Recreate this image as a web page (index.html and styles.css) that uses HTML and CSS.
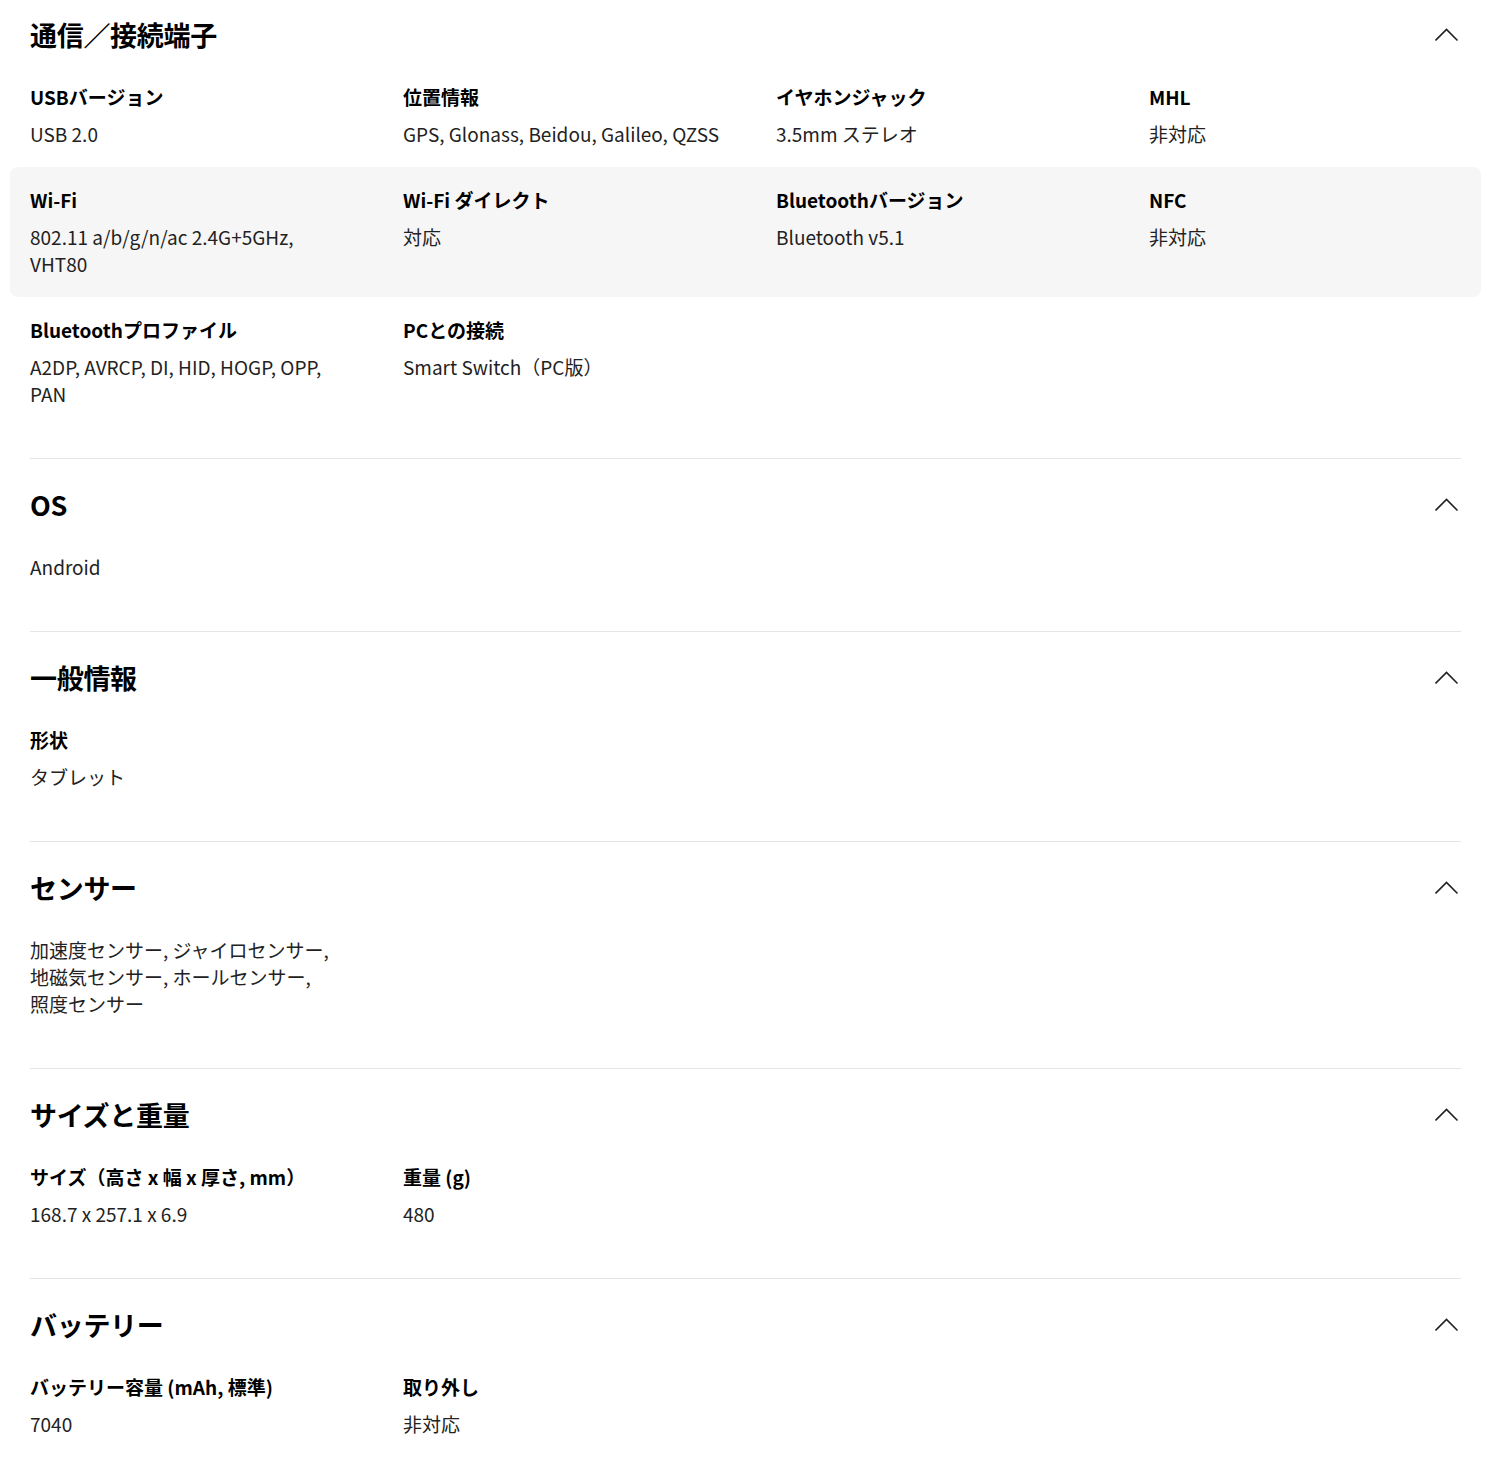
FILE: index.html
```html
<!DOCTYPE html>
<html lang="ja">
<head>
  <meta charset="UTF-8">
  <meta name="viewport" content="width=device-width, initial-scale=1.0">
  <title>スペック</title>
  <link rel="stylesheet" href="styles.css">
</head>
<body>
  <main class="specs">

    <!-- 通信／接続端子 -->
    <section class="spec-section">
      <div class="spec-head">
        <h2>通信／接続端子</h2>
        <svg class="chevron" width="24" height="24" viewBox="0 0 24 24"><polyline points="0.5,17.5 11.5,6.5 22.5,17.5"/></svg>
      </div>
      <div class="spec-row">
        <div class="spec-item"><h3>USBバージョン</h3><p>USB 2.0</p></div>
        <div class="spec-item"><h3>位置情報</h3><p>GPS, Glonass, Beidou, Galileo, QZSS</p></div>
        <div class="spec-item"><h3>イヤホンジャック</h3><p>3.5mm ステレオ</p></div>
        <div class="spec-item"><h3>MHL</h3><p>非対応</p></div>
      </div>
      <div class="spec-row">
        <div class="spec-item"><h3>Wi-Fi</h3><p>802.11 a/b/g/n/ac 2.4G+5GHz, VHT80</p></div>
        <div class="spec-item"><h3>Wi-Fi ダイレクト</h3><p>対応</p></div>
        <div class="spec-item"><h3>Bluetoothバージョン</h3><p>Bluetooth v5.1</p></div>
        <div class="spec-item"><h3>NFC</h3><p>非対応</p></div>
      </div>
      <div class="spec-row">
        <div class="spec-item"><h3>Bluetoothプロファイル</h3><p>A2DP, AVRCP, DI, HID, HOGP, OPP, PAN</p></div>
        <div class="spec-item"><h3>PCとの接続</h3><p>Smart Switch（PC版）</p></div>
      </div>
    </section>

    <!-- OS -->
    <section class="spec-section">
      <div class="spec-head">
        <h2>OS</h2>
        <svg class="chevron" width="24" height="24" viewBox="0 0 24 24"><polyline points="0.5,17.5 11.5,6.5 22.5,17.5"/></svg>
      </div>
      <div class="spec-row">
        <div class="spec-item"><p>Android</p></div>
      </div>
    </section>

    <!-- 一般情報 -->
    <section class="spec-section">
      <div class="spec-head">
        <h2>一般情報</h2>
        <svg class="chevron" width="24" height="24" viewBox="0 0 24 24"><polyline points="0.5,17.5 11.5,6.5 22.5,17.5"/></svg>
      </div>
      <div class="spec-row">
        <div class="spec-item"><h3>形状</h3><p>タブレット</p></div>
      </div>
    </section>

    <!-- センサー -->
    <section class="spec-section">
      <div class="spec-head">
        <h2>センサー</h2>
        <svg class="chevron" width="24" height="24" viewBox="0 0 24 24"><polyline points="0.5,17.5 11.5,6.5 22.5,17.5"/></svg>
      </div>
      <div class="spec-row">
        <div class="spec-item"><p>加速度センサー, ジャイロセンサー, 地磁気センサー, ホールセンサー, 照度センサー</p></div>
      </div>
    </section>

    <!-- サイズと重量 -->
    <section class="spec-section">
      <div class="spec-head">
        <h2>サイズと重量</h2>
        <svg class="chevron" width="24" height="24" viewBox="0 0 24 24"><polyline points="0.5,17.5 11.5,6.5 22.5,17.5"/></svg>
      </div>
      <div class="spec-row">
        <div class="spec-item"><h3>サイズ（高さ x 幅 x 厚さ, mm）</h3><p>168.7 x 257.1 x 6.9</p></div>
        <div class="spec-item"><h3>重量 (g)</h3><p>480</p></div>
      </div>
    </section>

    <!-- バッテリー -->
    <section class="spec-section">
      <div class="spec-head">
        <h2>バッテリー</h2>
        <svg class="chevron" width="24" height="24" viewBox="0 0 24 24"><polyline points="0.5,17.5 11.5,6.5 22.5,17.5"/></svg>
      </div>
      <div class="spec-row">
        <div class="spec-item"><h3>バッテリー容量 (mAh, 標準)</h3><p>7040</p></div>
        <div class="spec-item"><h3>取り外し</h3><p>非対応</p></div>
      </div>
    </section>

  </main>
</body>
</html>
```

FILE: styles.css
```css
/* Global Styles */
* {
  margin: 0;
  padding: 0;
  box-sizing: border-box;
}

body {
  background-color: #fff;
  color: #000;
  font-family: "Noto Sans CJK JP", "Noto Sans", sans-serif;
}

/* Spec list */
.specs {
  width: 1431px;
  margin-left: 30px;
}

.spec-section {
  padding: 28px 0 31px;
}

.spec-section:first-child {
  padding-top: 17px;
}

.spec-section + .spec-section {
  border-top: 1px solid #e5e5e5;
}

.spec-head {
  display: flex;
  justify-content: space-between;
  align-items: center;
  height: 36px;
  margin-bottom: 11px;
}

.spec-head h2 {
  font-size: 27px;
  font-weight: 700;
  line-height: 36px;
  letter-spacing: -0.3px;
}

.chevron {
  fill: none;
  stroke: #222;
  stroke-width: 1.6;
  margin-right: 2px;
}

/* Rows of four columns, every second row tinted */
.spec-row {
  display: grid;
  grid-template-columns: repeat(4, 321px);
  column-gap: 52px;
  margin: 0 -20px;
  padding: 19px 20px 20px;
  border-radius: 8px;
}

.spec-row:nth-child(odd) {
  background-color: #f6f6f6;
}

.spec-item h3 {
  font-size: 19px;
  font-weight: 700;
  line-height: 27px;
  margin-bottom: 10px;
  color: #000;
}

.spec-item p {
  font-size: 19px;
  font-weight: 400;
  line-height: 27px;
  color: #222;
  word-break: keep-all;
}
```
